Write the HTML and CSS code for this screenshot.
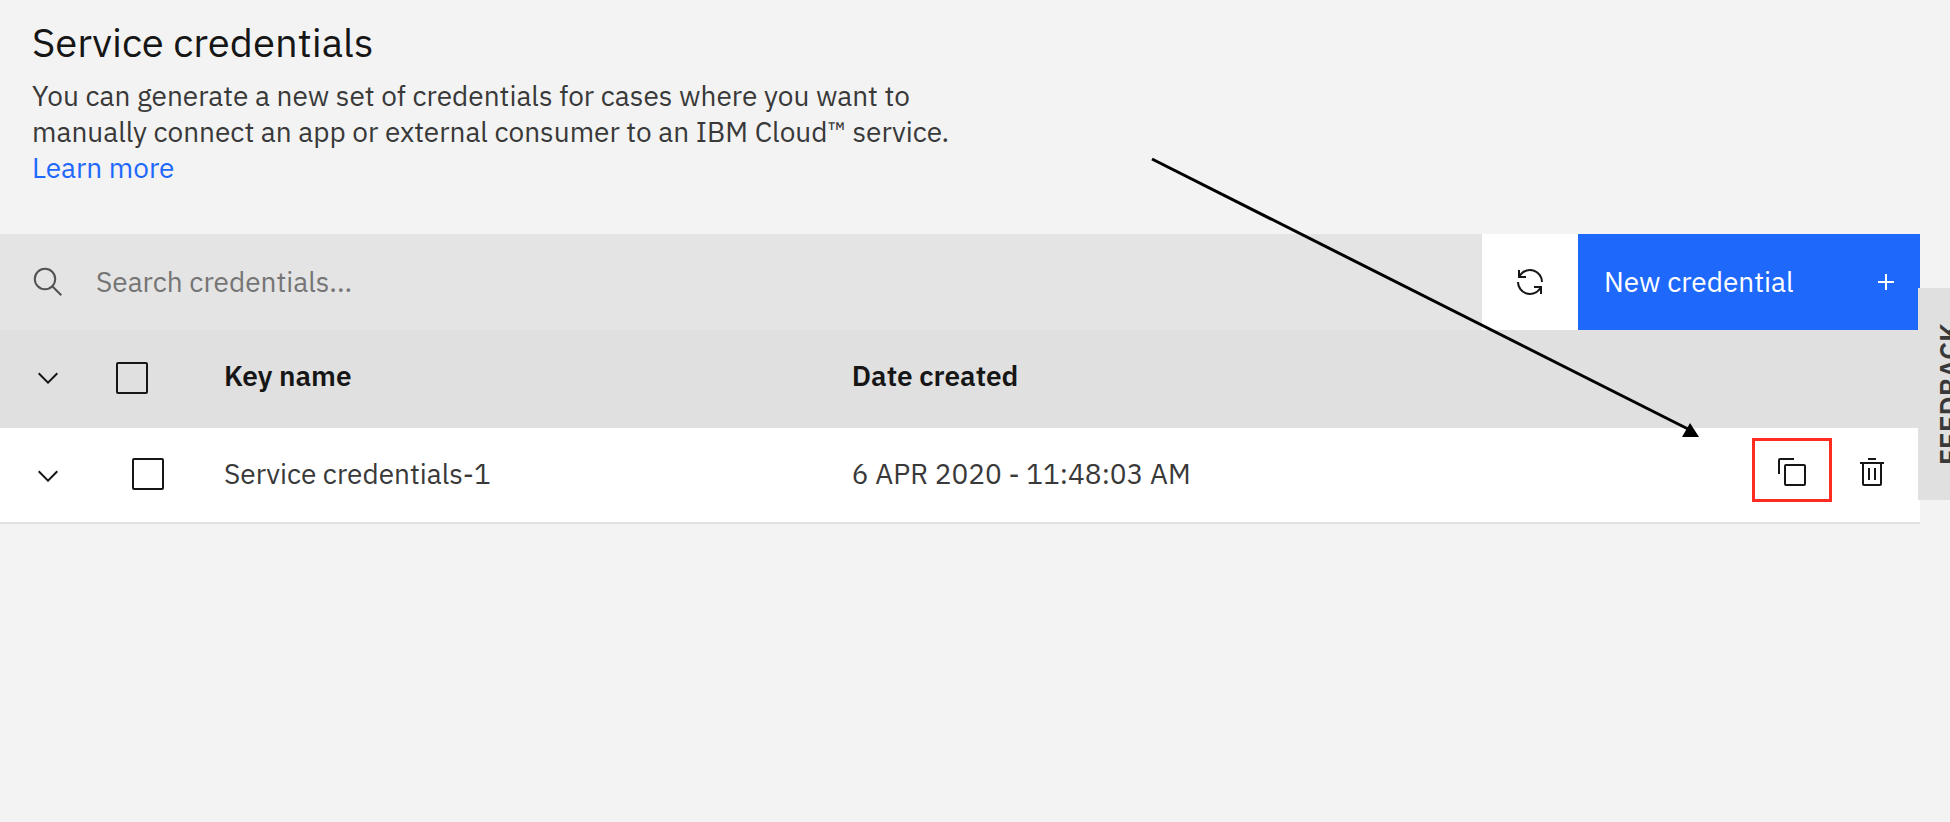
FILE: index.html
```html
<!DOCTYPE html>
<html lang="en">
<head>
<meta charset="utf-8">
<title>Service credentials</title>
<link rel="stylesheet" href="styles.css">
</head>
<body>
<main class="page">
  <header class="intro">
    <h1 class="title">Service credentials</h1>
    <p class="description">You can generate a new set of credentials for cases where you want to<br>manually connect an app or external consumer to an IBM Cloud™ service.<br><a class="link" href="#">Learn more</a></p>
  </header>

  <section class="credentials">
    <div class="toolbar">
      <label class="search">
        <svg class="icon search-icon" viewBox="0 0 32 32" aria-hidden="true"><circle cx="13" cy="13" r="10.2"/><path d="M20.3 20.3 29.300 29.300"/></svg>
        <input class="search-input" type="text" placeholder="Search credentials..." aria-label="Search credentials">
      </label>
      <button class="refresh" type="button" aria-label="Refresh">
        <svg class="icon" viewBox="0 0 32 32" aria-hidden="true"><path d="M12 10H6.78A11 11 0 0 1 27 16h2A13 13 0 0 0 6 7.68V4H4v8h8ZM20 22h5.22A11 11 0 0 1 5 16H3a13 13 0 0 0 23 8.32V28h2v-8h-8Z"/></svg>
      </button>
      <button class="create" type="button">
        <span>New credential</span>
        <svg class="icon" viewBox="0 0 32 32" aria-hidden="true"><path d="M17 15V8h-2v7H8v2h7v7h2v-7h7v-2Z"/></svg>
      </button>
    </div>

    <table class="table">
      <colgroup><col class="col-expand"><col class="col-select"><col class="col-name"><col><col class="col-actions"></colgroup>
      <thead>
        <tr>
          <th class="control"><button class="expand" type="button" aria-label="Expand all"><svg class="icon" viewBox="0 0 32 32" aria-hidden="true"><path d="M16 22 6 12l1.4-1.4 8.6 8.6 8.6-8.6L26 12Z"/></svg></button></th>
          <th class="control select-all"><input class="checkbox" type="checkbox" aria-label="Select all"></th>
          <th>Key name</th>
          <th>Date created</th>
          <th></th>
        </tr>
      </thead>
      <tbody>
        <tr>
          <td class="control"><button class="expand" type="button" aria-label="Expand row"><svg class="icon" viewBox="0 0 32 32" aria-hidden="true"><path d="M16 22 6 12l1.4-1.4 8.6 8.6 8.6-8.6L26 12Z"/></svg></button></td>
          <td class="select-row"><input class="checkbox" type="checkbox" aria-label="Select Service credentials-1"></td>
          <td>Service credentials-1</td>
          <td>6 APR 2020 - 11:48:03 AM</td>
          <td>
            <div class="actions">
              <button class="action copy" type="button" aria-label="Copy"><svg class="icon" viewBox="0 0 32 32" aria-hidden="true"><path d="M28 10v18H10V10h18m0-2H10a2 2 0 0 0-2 2v18a2 2 0 0 0 2 2h18a2 2 0 0 0 2-2V10a2 2 0 0 0-2-2ZM4 18H2V4a2 2 0 0 1 2-2h14v2H4Z"/></svg></button>
              <button class="action" type="button" aria-label="Delete"><svg class="icon" viewBox="0 0 32 32" aria-hidden="true"><path d="M12 12h2v12h-2zM18 12h2v12h-2zM4 6v2h2v20a2 2 0 0 0 2 2h16a2 2 0 0 0 2-2V8h2V6ZM8 28V8h16v20ZM12 2h8v2h-8z"/></svg></button>
            </div>
          </td>
        </tr>
      </tbody>
    </table>

    <svg class="pointer" viewBox="0 0 550 282" aria-hidden="true"><path d="M2 3 540 274" fill="none" stroke="#000" stroke-width="3"/><path d="M540 267 549 281H532Z"/></svg>
  </section>
</main>
<button class="feedback" type="button"><span class="feedback-label">FEEDBACK</span></button>
</body>
</html>
```
FILE: styles.css
```css
* {
  box-sizing: border-box;
}

body {
  margin: 0;
  background: #f3f3f3;
  color: #393939;
  font-family: "IBM Plex Sans", "Noto Sans", sans-serif;
  font-size: 28px;
  line-height: 36px;
  overflow-x: hidden;
}

button,
input {
  margin: 0;
  border: 0;
  border-radius: 0;
  padding: 0;
  background: none;
  color: inherit;
  font: inherit;
}

.page {
  padding: 18px 30px 0 0;
}

.intro {
  padding: 0 32px 48px;
}

.title {
  margin: 0 0 12px;
  color: #161616;
  font-size: 40px;
  font-weight: 400;
  line-height: 48px;
}

.description {
  margin: 0;
}

.link {
  color: #1e68fc;
  text-decoration: none;
}

.icon {
  display: block;
  width: 32px;
  height: 32px;
  fill: #161616;
}

.credentials {
  position: relative;
}

.toolbar {
  display: flex;
  height: 96px;
}

.search {
  display: flex;
  flex: 1;
  align-items: center;
  gap: 32px;
  padding-left: 32px;
  background: #e4e4e4;
}

.search-icon {
  fill: none;
  stroke: #525252;
  stroke-width: 2;
}

.search-input {
  flex: 1;
  height: 96px;
  padding-bottom: 2px;
  outline: 0;
}

.search-input::placeholder {
  color: #757575;
  opacity: 1;
}

.refresh {
  display: grid;
  place-items: center;
  width: 96px;
  background: #fff;
}

.create {
  display: flex;
  align-items: center;
  justify-content: space-between;
  width: 342px;
  padding: 0 18px 0 26px;
  background: #1e68fc;
  color: #fff;
}

.create .icon {
  fill: #fff;
}

.table {
  width: 100%;
  border-collapse: separate;
  border-spacing: 0;
  table-layout: fixed;
}

.table th,
.table td {
  padding: 0 0 2px;
  text-align: left;
  vertical-align: middle;
}

.table th {
  height: 98px;
  padding-bottom: 6px;
  background: #e0e0e0;
  color: #161616;
  font-weight: 600;
}

.table td {
  height: 96px;
  border-bottom: 2px solid #e0e0e0;
  background: #fff;
}

.table th.control {
  padding-bottom: 2px;
}

.table td.control {
  padding: 2px 0 0;
}

.col-expand {
  width: 96px;
}

.col-select {
  width: 128px;
}

.col-name {
  width: 32.7%;
}

.col-actions {
  width: 180px;
}

.expand {
  display: block;
  padding: 0 32px;
}

.table .select-all {
  padding-left: 20px;
}

.table .select-row {
  padding-left: 36px;
}

.checkbox {
  display: block;
  width: 32px;
  height: 32px;
  border: 2px solid #161616;
  border-radius: 2px;
  appearance: none;
}

.actions {
  display: flex;
  align-items: center;
  padding: 0 8px 8px 12px;
}

.action {
  display: grid;
  place-items: center;
  width: 80px;
  height: 64px;
  padding-top: 4px;
}

.copy {
  border: 3px solid #ff2d20;
}

.pointer {
  position: absolute;
  top: -78px;
  right: 220px;
  width: 550px;
  height: 282px;
  pointer-events: none;
}

.feedback {
  position: absolute;
  top: 288px;
  right: 0;
  width: 32px;
  height: 212px;
  overflow: hidden;
  background: #e0e0e0;
}

.feedback-label {
  display: block;
  width: 36px;
  margin: 0 auto 0 14px;
  font-weight: 600;
  writing-mode: vertical-rl;
  transform: rotate(180deg);
}
```
